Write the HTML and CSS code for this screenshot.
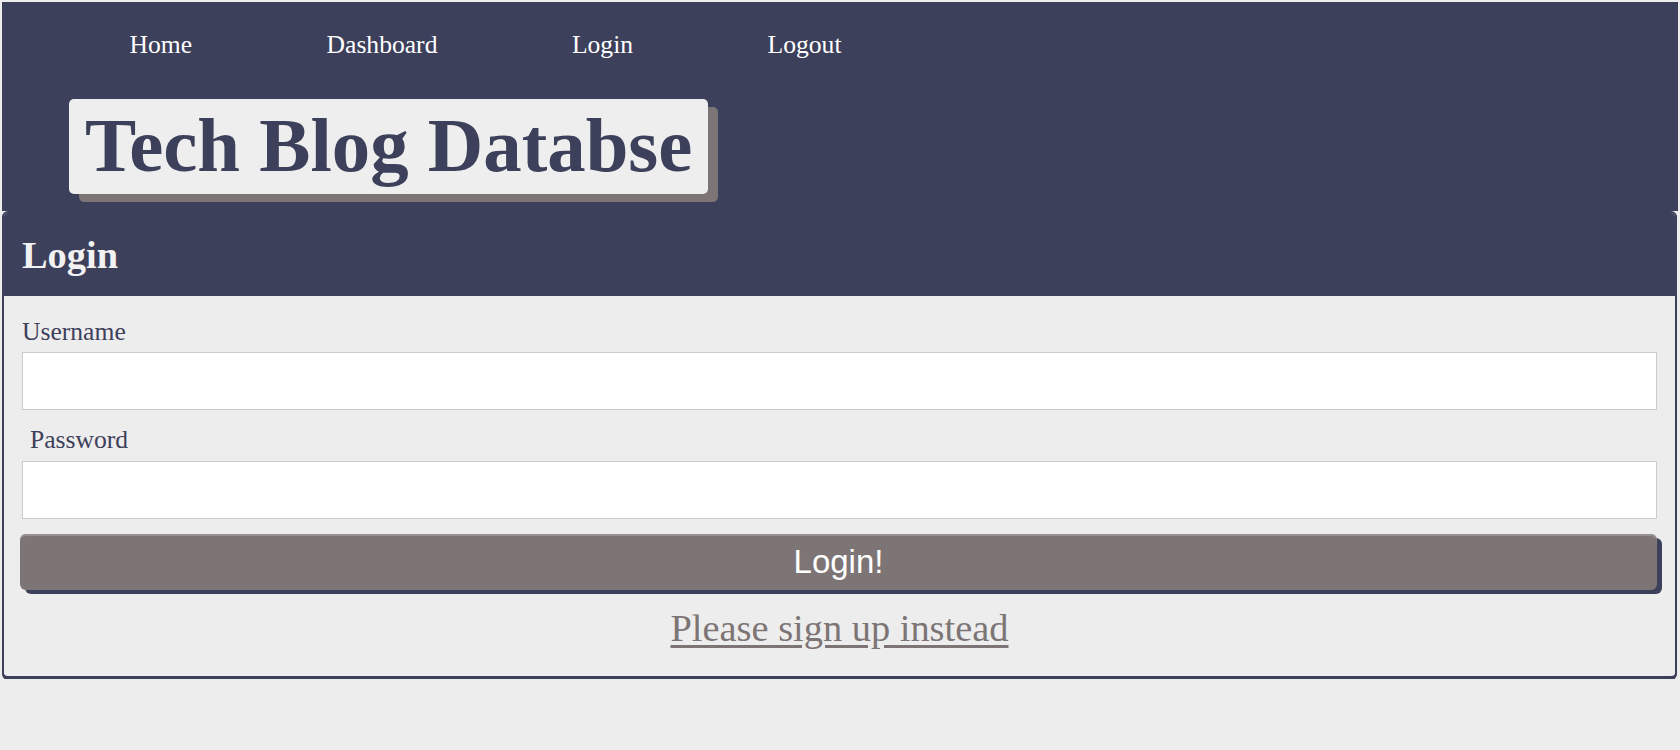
FILE: index.html
```html
<!DOCTYPE html>
<html lang="en">
<head>
<meta charset="utf-8">
<title>Tech Blog Databse</title>
<link rel="stylesheet" href="styles.css">
</head>
<body>
  <header class="site-header">
    <nav class="nav">
      <a class="nav-link" href="#">Home</a>
      <a class="nav-link" href="#">Dashboard</a>
      <a class="nav-link" href="#">Login</a>
      <a class="nav-link" href="#">Logout</a>
    </nav>
    <h1 class="brand">Tech Blog Databse</h1>
  </header>
  <main class="card">
    <h2 class="card-title">Login</h2>
    <form class="card-body">
      <label class="field-label" for="username">Username</label>
      <input class="field-input" id="username" type="text">
      <label class="field-label field-label-indent" for="password">Password</label>
      <input class="field-input" id="password" type="password">
      <button class="submit-btn" type="button">Login!</button>
      <a class="signup-link" href="#">Please sign up instead</a>
    </form>
  </main>
</body>
</html>
```
FILE: styles.css
```css
* {
  box-sizing: border-box;
}

html {
  background: #ededed;
}

body {
  margin: 2px 2px 0 2px;
  font-family: "Liberation Serif", "Times New Roman", serif;
  background: #ededed;
  color: #3d405b;
}

.site-header {
  background: #3d405b;
  padding-bottom: 17px;
}

.nav {
  display: flex;
  gap: 134.5px;
  padding: 28px 0 32px 127.5px;
  margin-right: -2px;
  background: #3d405b;
}

.nav-link {
  color: #ffffff;
  text-decoration: none;
  font-size: 25.6px;
  line-height: 29px;
}

.brand {
  display: inline-block;
  margin: 8px 0 0 67px;
  padding: 3px 16px 4px;
  background: #eeeeee;
  color: #3d405b;
  border-radius: 5px;
  box-shadow: 10px 8px 0 #7d7575;
  font-size: 76.8px;
  font-weight: bold;
  line-height: 88px;
}

.card {
  display: block;
  margin: 0 1px 0 0;
  border: 2px solid #3d405b;
  border-bottom-width: 3px;
  border-radius: 6px;
  box-shadow: 0 1px 0 #3d405b;
  background: #ededed;
  overflow: hidden;
}

.card-title {
  margin: 0;
  background: #3d405b;
  color: #f2f2f2;
  font-size: 38.4px;
  font-weight: bold;
  line-height: 44px;
  padding: 20px 18px 19px;
}

.card-body {
  display: flex;
  flex-direction: column;
  padding: 21px 18px 26px 18px;
}

.field-label {
  font-size: 25.6px;
  line-height: 29px;
  color: #3d405b;
  margin-bottom: 6px;
}

.field-label-indent {
  padding-left: 8px;
  margin-bottom: 7px;
}

.field-input {
  height: 58px;
  border: 1px solid #cccccc;
  background: #ffffff;
  margin-bottom: 15px;
  font-size: 20px;
}

.submit-btn {
  height: 56px;
  border: none;
  border-radius: 6px;
  background: #7d7575;
  box-shadow: inset 0 2px 0 #989191, 5px 4px 0 #3d405b;
  color: #ffffff;
  font-family: "Liberation Sans", Arial, sans-serif;
  font-size: 33px;
  margin: 0 0 16px -2px;
  padding: 0;
}

.signup-link {
  align-self: center;
  color: #7d7575;
  font-size: 38.4px;
  line-height: 44px;
  text-decoration: underline;
  text-underline-offset: 4px;
}
```
